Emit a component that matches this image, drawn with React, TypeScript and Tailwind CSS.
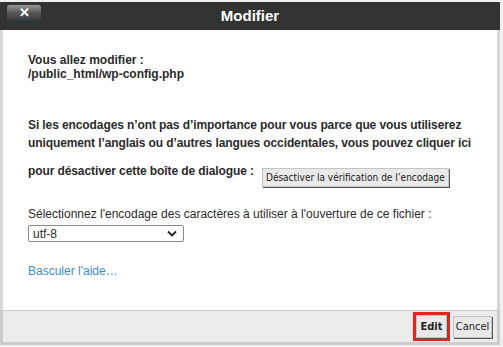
import React from "react";

const sans = { fontFamily: '"Liberation Sans", Arial, sans-serif' };

function GrayButton({
  children,
  bold = false,
  size = "h-[19px] px-[3px] text-[10px]",
}: {
  children: React.ReactNode;
  bold?: boolean;
  size?: string;
}) {
  return (
    <button
      type="button"
      className={`whitespace-nowrap border border-[#c4c4c4] bg-[#e9e9e9] font-['DejaVu_Sans_Condensed'] leading-none text-[#222] shadow-[1px_1px_0_#555] ${size} ${bold ? "font-bold" : "font-normal"}`}
    >
      {children}
    </button>
  );
}

export default function App() {
  return (
    <div className="h-[347px] w-[503px] overflow-hidden bg-[#f0f0f0] pt-[2px]" style={sans}>
      <div className="flex w-[500px] flex-col">
        {/* title bar */}
        <div className="relative flex h-[28px] items-center justify-center bg-[#333333]">
          <button
            type="button"
            className="absolute left-[7px] top-[3px] flex h-[16px] w-[34px] items-center justify-center rounded-[3px] bg-gradient-to-b from-[#9a9a9a] via-[#555] to-[#3a3a3a] pb-[2px] text-[13px] font-bold leading-none text-white shadow-[0_1px_1px_#1e3a3a]"
          >
            ✕
          </button>
          <h1 className="text-[15px] font-bold text-white">Modifier</h1>
        </div>

        {/* body */}
        <div className="h-[280px] whitespace-nowrap border-x-[3px] border-[#d6d6d6] bg-white px-[25px] pt-[23px] text-[12px] text-[#2b2b2b]">
          <div className="font-bold leading-[14px]">
            <div>Vous allez modifier :</div>
            <div>/public_html/wp-config.php</div>
          </div>

          <div className="mt-[35px] font-bold leading-[18px] tracking-[-0.1px]">
            <div>Si les encodages n’ont pas d’importance pour vous parce que vous utiliserez</div>
            <div>uniquement l’anglais ou d’autres langues occidentales, vous pouvez cliquer ici</div>
            <div className="mt-[10px] flex items-start">
              <span>pour désactiver cette boîte de dialogue :</span>
              <span className="ml-[8px] mt-[6px] flex tracking-normal">
                <GrayButton>Désactiver la vérification de l’encodage</GrayButton>
              </span>
            </div>
          </div>

          <div className="mt-[20px] leading-[14px]">
            Sélectionnez l'encodage des caractères à utiliser à l'ouverture de ce fichier :
          </div>
          <div className="mt-[4px] flex h-[17px] w-[156px] items-center justify-between rounded-[2px] border border-[#8a8a8a] bg-white pl-[4px] pr-[6px]">
            <span className="leading-none">utf-8</span>
            <svg width="10" height="7" viewBox="0 0 10 7">
              <path d="M1 1.5 L5 5.5 L9 1.5" fill="none" stroke="#222" strokeWidth="1.8" />
            </svg>
          </div>

          <div className="mt-[22px] leading-[14px] text-[#3d8bd0]">Basculer l'aide…</div>
        </div>

        {/* footer */}
        <div className="flex h-[35px] items-center justify-end gap-[3px] border-x-[3px] border-b-[3px] border-t border-[#cccccc] bg-[#ececec] pr-[5px]">
          <div className="flex border-[3px] border-[#e8241a]">
            <GrayButton bold size="h-[23px] w-[31px] text-[11px]">
              Edit
            </GrayButton>
          </div>
          <div className="flex">
            <GrayButton size="h-[22px] w-[39px] text-[11px]">Cancel</GrayButton>
          </div>
        </div>
      </div>
    </div>
  );
}
